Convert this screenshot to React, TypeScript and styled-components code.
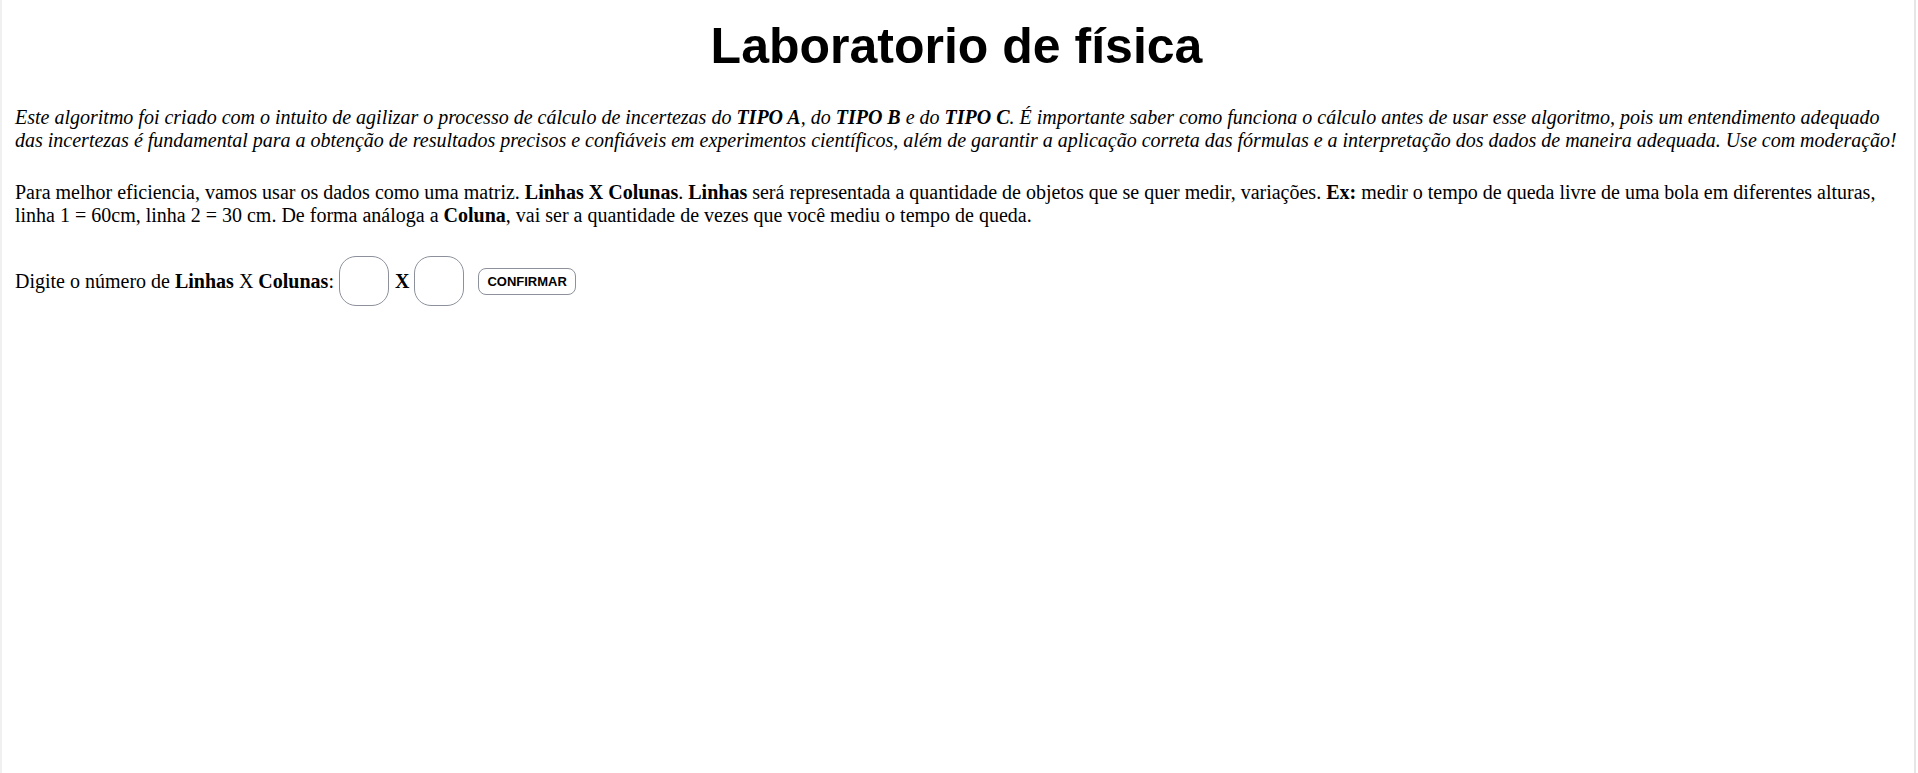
import React from "react";
import styled, { createGlobalStyle } from "styled-components";

const Global = createGlobalStyle`
  html, body { margin: 0; padding: 0; background: #ffffff; }
  body { font-family: "Liberation Serif", "Times New Roman", serif; color: #000; }
`;

const Page = styled.main`
  box-sizing: border-box;
  width: 1916px;
  min-height: 773px;
  border-left: 2px solid #f0f0f0;
  border-right: 2px solid #e6e6e6;
  padding: 0 16px 0 13px;
`;

const Title = styled.h1`
  margin: 0;
  padding-top: 18px;
  height: 56px;
  text-align: center;
  font-family: "Liberation Sans", Arial, sans-serif;
  font-weight: 700;
  font-size: 50px;
  line-height: 56px;
`;

const Paragraph = styled.p<{ $italic?: boolean; $top: number }>`
  margin: ${(p) => p.$top}px 0 0;
  font-size: 20px;
  line-height: 23px;
  font-style: ${(p) => (p.$italic ? "italic" : "normal")};
`;

const InputRow = styled.div`
  display: flex;
  align-items: center;
  margin-top: 29px;
  font-size: 20px;
  line-height: 23px;
`;

const SizeInput = styled.input`
  box-sizing: border-box;
  width: 50px;
  height: 50px;
  margin-left: 5px;
  border: 1px solid #8c919b;
  border-radius: 17px;
  background: #fff;
  padding: 0 6px;
  font-size: 16px;
  outline: none;
`;

const Times = styled.b`
  margin: 0 0 0 6px;
`;

const Button = styled.button`
  margin-left: 14px;
  height: 27px;
  padding: 0 8px;
  background: #fff;
  border: 1px solid #8c919b;
  border-radius: 8px;
  font-family: "Liberation Sans", Arial, sans-serif;
  font-weight: 700;
  font-size: 13px;
  color: #000;
  cursor: pointer;
`;

export default function App() {
  return (
    <>
      <Global />
      <Page>
        <Title>Laboratorio de física</Title>
        <Paragraph $italic $top={32}>
          Este algoritmo foi criado com o intuito de agilizar o processo de cálculo de incertezas do <b>TIPO A</b>, do{" "}
          <b>TIPO B</b> e do <b>TIPO C</b>. É importante saber como funciona o cálculo antes de usar esse algoritmo, pois um
          entendimento adequado das incertezas é fundamental para a obtenção de resultados precisos e confiáveis em
          experimentos científicos, além de garantir a aplicação correta das fórmulas e a interpretação dos dados de
          maneira adequada. Use com moderação!
        </Paragraph>
        <Paragraph $top={29}>
          Para melhor eficiencia, vamos usar os dados como uma matriz. <b>Linhas X Colunas</b>. <b>Linhas</b> será
          representada a quantidade de objetos que se quer medir, variações. <b>Ex:</b> medir o tempo de queda livre de uma
          bola em diferentes alturas, linha 1 = 60cm, linha 2 = 30 cm. De forma análoga a <b>Coluna</b>, vai ser a
          quantidade de vezes que você mediu o tempo de queda.
        </Paragraph>
        <InputRow>
          <span>
            Digite o número de <b>Linhas</b> X <b>Colunas</b>:
          </span>
          <SizeInput type="text" aria-label="Linhas" />
          <Times>X</Times>
          <SizeInput type="text" aria-label="Colunas" />
          <Button type="button">CONFIRMAR</Button>
        </InputRow>
      </Page>
    </>
  );
}
